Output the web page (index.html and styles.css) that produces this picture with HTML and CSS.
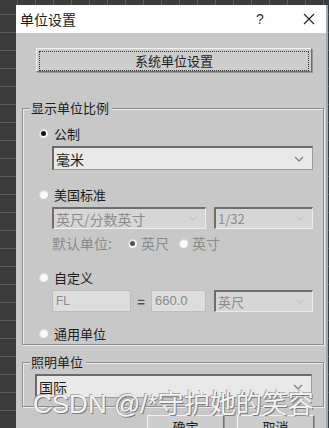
FILE: index.html
```html
<!DOCTYPE html>
<html lang="zh-CN">
<head>
    <meta charset="UTF-8">
    <meta name="viewport" content="width=device-width, initial-scale=1.0">
    <title>单位设置</title>
    <link rel="stylesheet" href="styles.css">
</head>
<body>
    <div class="dialog">
        <div class="titlebar">
            <span class="title">单位设置</span>
            <span class="help">?</span>
            <span class="close">
                <svg width="12" height="12" viewBox="0 0 12 12"><path d="M1 1L11 11M11 1L1 11" stroke="#222" stroke-width="1.1"/></svg>
            </span>
        </div>
        <div class="body">
            <div class="sys-row">
                <button class="btn sys-btn"><span class="focus">系统单位设置</span></button>
            </div>

            <div class="group">
                <div class="group-title">显示单位比例</div>
                <div class="group-body">
                    <div class="radio-row">
                        <span class="radio checked"></span><span>公制</span>
                    </div>
                    <div class="select big first">
                        <span>毫米</span>
                        <svg class="chev" width="10" height="6" viewBox="0 0 10 6"><path d="M1 1L5 5L9 1" fill="none" stroke="#777" stroke-width="1.1"/></svg>
                    </div>

                    <div class="radio-row us">
                        <span class="radio"></span><span>美国标准</span>
                    </div>
                    <div class="field-row">
                        <div class="select disabled wide">
                            <span>英尺/分数英寸</span>
                            <svg class="chev" width="8" height="5" viewBox="0 0 10 6"><path d="M1 1L5 5L9 1" fill="none" stroke="#b5b5b5" stroke-width="1.1"/></svg>
                        </div>
                        <div class="select disabled narrow">
                            <span>1/32</span>
                            <svg class="chev" width="8" height="5" viewBox="0 0 10 6"><path d="M1 1L5 5L9 1" fill="none" stroke="#b5b5b5" stroke-width="1.1"/></svg>
                        </div>
                    </div>
                    <div class="default-row">
                        <span class="muted">默认单位:</span>
                        <span class="radio checked dim"></span><span class="muted">英尺</span>
                        <span class="radio dim second"></span><span class="muted">英寸</span>
                    </div>

                    <div class="radio-row custom">
                        <span class="radio"></span><span>自定义</span>
                    </div>
                    <div class="field-row">
                        <div class="input fl">FL</div>
                        <span class="eq">=</span>
                        <div class="input val">660.0</div>
                        <div class="select disabled narrow">
                            <span>英尺</span>
                            <svg class="chev" width="8" height="5" viewBox="0 0 10 6"><path d="M1 1L5 5L9 1" fill="none" stroke="#b5b5b5" stroke-width="1.1"/></svg>
                        </div>
                    </div>

                    <div class="radio-row generic">
                        <span class="radio"></span><span>通用单位</span>
                    </div>
                </div>
            </div>

            <div class="group light">
                <div class="group-title">照明单位</div>
                <div class="select big full">
                    <span>国际</span>
                    <svg class="chev" width="10" height="6" viewBox="0 0 10 6"><path d="M1 1L5 5L9 1" fill="none" stroke="#777" stroke-width="1.1"/></svg>
                </div>
            </div>

            <div class="actions">
                <button class="btn ok">确定</button>
                <button class="btn">取消</button>
            </div>
        </div>
    </div>
    <div class="watermark">CSDN @/*守护她的笑容</div>
</body>
</html>
```

FILE: styles.css
```css
body {
    margin: 0;
    width: 329px;
    height: 428px;
    overflow: hidden;
    font-family: "Noto Sans CJK SC", "Liberation Sans", sans-serif;
    font-size: 13px;
    color: #1c1c1c;
    background-color: #3b3b3b;
    background-image:
        repeating-linear-gradient(90deg, transparent 0 17px, #5c5c5c 17px 18px),
        repeating-linear-gradient(0deg, transparent 0 17px, #5c5c5c 17px 18px);
    position: relative;
}
.dialog {
    margin: 5px 0 0 16px;
    width: 310px;
    height: 423px;
    background: #c8c8c8;
    border-right: 2px solid #8fb0c8;
}
.titlebar {
    height: 28px;
    background: #fff;
    display: flex;
    align-items: center;
    padding-left: 4px;
}
.title {
    font-size: 14px;
    flex-grow: 1;
}
.help {
    font-family: "Liberation Sans", sans-serif;
    font-size: 14px;
    width: 47px;
    color: #333;
}
.close {
    width: 23px;
    display: flex;
}
.body {
    padding: 15px 0 0 6px;
}
.sys-row {
    padding-left: 14px;
}
.btn {
    font-family: "Noto Sans CJK SC", sans-serif;
    font-size: 13px;
    color: #1c1c1c;
    background: #cdcdcd;
    border: 1px solid #7a7a7a;
    border-color: #f2f2f2 #6e6e6e #6e6e6e #f2f2f2;
    box-shadow: 1px 1px 0 #9a9a9a;
    padding: 0;
    height: 24px;
    line-height: 20px;
}
.sys-btn {
    width: 276px;
    padding: 2px;
}
.sys-btn .focus {
    display: block;
    border: 1px dotted #333;
    height: 18px;
    line-height: 18px;
}
.group {
    margin-top: 36px;
    width: 302px;
    box-sizing: border-box;
    border: 1px solid #8c8c8c;
    box-shadow: inset 1px 1px 0 #ececec, 1px 1px 0 #ececec;
    padding: 0 12px 2px 0;
}
.group-title {
    width: fit-content;
    margin: -9px 0 0 7px;
    padding: 0 3px 0 1px;
    line-height: 16px;
    background: #c8c8c8;
}
.group-body {
    padding: 8px 0 0 16px;
}
.radio-row {
    display: flex;
    align-items: center;
    height: 18px;
    gap: 6px;
}
.radio {
    display: inline-block;
    width: 9px;
    height: 9px;
    border-radius: 50%;
    background: radial-gradient(circle at 60% 60%, #fafafa 0 45%, #d8d8d8 70%, #8a8a8a 100%);
    position: relative;
}
.radio.checked::after {
    content: "";
    position: absolute;
    left: 2px;
    top: 2px;
    width: 5px;
    height: 5px;
    border-radius: 50%;
    background: #111;
}
.radio.dim.checked::after {
    background: #555;
}
.us {
    margin-top: 15px;
}
.custom {
    margin-top: 16px;
}
.generic {
    margin-top: 12px;
}
.select {
    display: flex;
    align-items: center;
    justify-content: space-between;
    box-sizing: border-box;
    background: #e9e9e9;
    border: 1px solid #9c9c9c;
    border-top: 2px solid #6a6a6a;
    border-left: 2px solid #6a6a6a;
    padding: 0 8px 0 2px;
}
.select.big {
    height: 24px;
    width: 261px;
    margin-left: 13px;
    font-size: 14px;
}
.select.first {
    margin-top: 4px;
}
.select.disabled {
    height: 22px;
    color: #8c8c8c;
    background: #d6d6d6;
    border-color: #6e6e6e #ececec #ececec #6e6e6e;
}
.select.wide {
    width: 154px;
    font-size: 14px;
}
.select.narrow {
    width: 99px;
    margin-left: auto;
    font-size: 13px;
}
.field-row {
    display: flex;
    align-items: center;
    margin: 4px 0 0 13px;
    width: 261px;
}
.default-row {
    display: flex;
    align-items: center;
    height: 18px;
    margin: 5px 0 0 13px;
}
.muted {
    color: #8a8a8a;
    font-size: 14px;
}
.default-row .radio {
    margin: 0 4px 0 16px;
}
.default-row .radio.second {
    margin-left: 10px;
}
.input {
    box-sizing: border-box;
    height: 22px;
    background: #dddddd;
    border: 1px solid #bdbdbd;
    color: #8a8a8a;
    padding: 0 3px;
    line-height: 20px;
    font-family: "Liberation Sans", sans-serif;
    font-size: 12px;
}
.input.fl {
    width: 79px;
}
.input.val {
    width: 55px;
    font-size: 13px;
}
.eq {
    width: 20px;
    text-align: center;
    font-weight: bold;
    color: #555;
}
.light {
    margin-top: 17px;
    padding-bottom: 8px;
}
.light .select.full {
    margin: 4px 0 0 12px;
    width: 277px;
}
.actions {
    display: flex;
    gap: 13px;
    margin: 8px 0 0 125px;
}
.actions .btn {
    width: 77px;
}
.watermark {
    position: absolute;
    left: 33px;
    top: 388px;
    font-family: "Liberation Sans", "Noto Sans CJK SC", sans-serif;
    font-size: 26px;
    line-height: 32px;
    color: #f4f4f4;
    text-shadow: 1px 1px 0 #7a7a7a, -1px -1px 0 #a8a8a8;
    white-space: nowrap;
}
```
